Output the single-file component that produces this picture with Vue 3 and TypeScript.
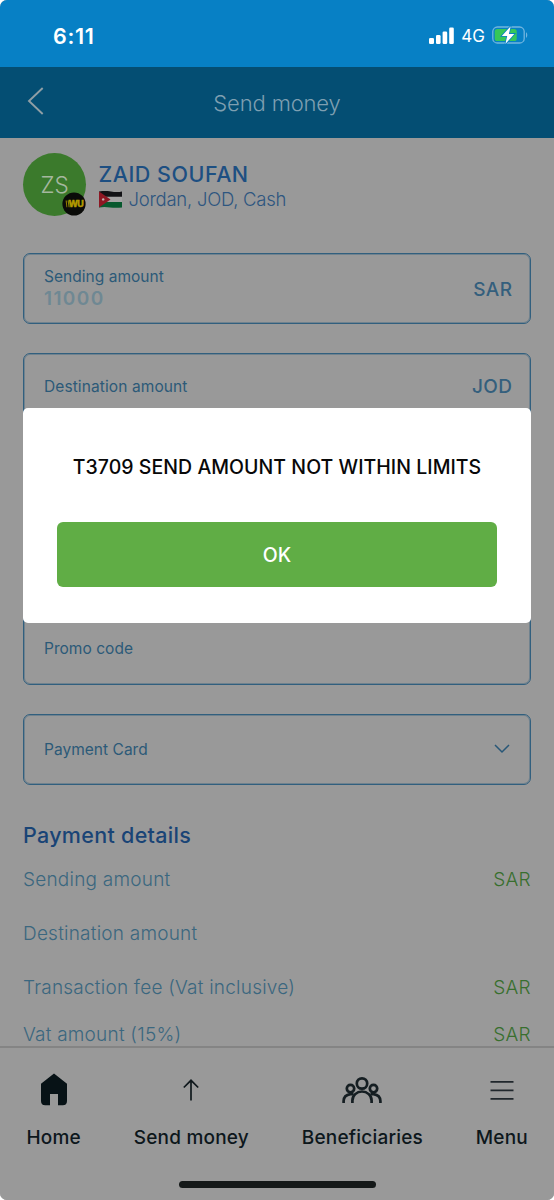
<script setup lang="ts">
interface DetailRow {
  label: string
  currency: string
  height: number
}

interface Tab {
  id: string
  label: string
}

const rows: DetailRow[] = [
  { label: 'Sending amount', currency: 'SAR', height: 54 },
  { label: 'Destination amount', currency: '', height: 54 },
  { label: 'Transaction fee (Vat inclusive)', currency: 'SAR', height: 47 },
  { label: 'Vat amount (15%)', currency: 'SAR', height: 43 },
]

const tabs: Tab[] = [
  { id: 'home', label: 'Home' },
  { id: 'send', label: 'Send money' },
  { id: 'people', label: 'Beneficiaries' },
  { id: 'menu', label: 'Menu' },
]
</script>

<template>
  <div class="phone">
    <header class="status">
      <span class="clock">6:11</span>
      <div class="indicators">
        <svg class="signal" width="26" height="17" viewBox="0 0 26 17">
          <rect x="0" y="11" width="5" height="6" rx="1.3" />
          <rect x="7" y="8" width="4.6" height="9" rx="1.3" />
          <rect x="13.6" y="4.5" width="4.6" height="12.5" rx="1.3" />
          <rect x="20.2" y="0.5" width="4.6" height="16.5" rx="1.3" />
        </svg>
        <span class="network">4G</span>
        <svg class="battery" width="36" height="20" viewBox="0 0 36 20">
          <rect x="0.8" y="2" width="31.4" height="16" rx="4.6" fill="none" stroke="#72b5df" stroke-width="1.3" />
          <rect x="2.7" y="4" width="22" height="12" rx="2.6" fill="#35c759" />
          <path d="M34 7.2c1.7.8 1.7 4.8 0 5.6z" fill="#72b5df" />
          <path d="M18.7 1.2 9.8 11h5.4l-1.8 8 8.9-10.1h-5.4z" fill="#fff" stroke="#0780c5" stroke-width="1.6" paint-order="stroke" />
        </svg>
      </div>
    </header>

    <nav class="titlebar">
      <svg class="back" width="18" height="30" viewBox="0 0 18 30">
        <path d="M15.7 2 2 15 15.7 28" fill="none" stroke="#8f9ea5" stroke-width="1.9" />
      </svg>
      <h1>Send money</h1>
    </nav>

    <main class="content">
      <section class="recipient">
        <div class="avatar">
          <span>ZS</span>
          <svg class="badge" width="24" height="24" viewBox="0 0 24 24">
            <circle cx="12" cy="12" r="11.6" fill="#0a0b08" />
            <path d="M3.6 8.6h1.2l.5 6.6H4.4zM5.5 8.6h1.3l.9 6.6H6.6z" fill="#8f7c00" />
            <text x="6.4" y="15.3">WU</text>
          </svg>
        </div>
        <div class="who">
          <div class="name">ZAID SOUFAN</div>
          <div class="place">
            <svg width="23" height="17" viewBox="0 0 23 17">
              <path d="M0 .4Q6-.6 12 .4t11 0V6H0z" fill="#131316" />
              <path d="M0 5.8h23v5.5H0z" fill="#a5a5a5" />
              <path d="M0 11h23v5.4q-6 .9-12 0t-11 0z" fill="#08592e" />
              <path d="M0 .4 11.5 8.4 0 16.4z" fill="#8d1723" />
              <circle cx="4.2" cy="8.4" r="1.2" fill="#c0b5b5" />
            </svg>
            <span>Jordan, JOD, Cash</span>
          </div>
        </div>
      </section>

      <div class="field amount">
        <div>
          <div class="label">Sending amount</div>
          <div class="value">11000</div>
        </div>
        <span class="currency sar">SAR</span>
      </div>
      <div class="field destination">
        <span class="label">Destination amount</span>
        <span class="currency">JOD</span>
      </div>
      <div class="field promo">
        <span class="label">Promo code</span>
      </div>
      <div class="field card">
        <span class="label">Payment Card</span>
        <svg class="chevron" width="18" height="12" viewBox="0 0 18 12">
          <path d="M2 2 9 9 16 2" fill="none" stroke="#285777" stroke-width="1.5" />
        </svg>
      </div>

      <h2>Payment details</h2>
      <div v-for="row in rows" :key="row.label" class="row" :style="{ height: row.height + 'px' }">
        <span>{{ row.label }}</span>
        <span class="green">{{ row.currency }}</span>
      </div>
    </main>

    <footer class="tabbar">
      <div class="tabs">
        <div v-for="tab in tabs" :key="tab.id" class="tab">
          <svg v-if="tab.id === 'home'" width="40" height="40" viewBox="0 0 40 40">
            <path d="M20 3.6 7 13.7V31q0 4.2 4.2 4.2H16V24h8v11.2h4.8q4.2 0 4.2-4.2V13.7z" fill="#071216" />
          </svg>
          <svg v-else-if="tab.id === 'send'" width="40" height="40" viewBox="0 0 40 40">
            <path d="M20 30.5V10.5M12.8 17.5 20 10.3l7.2 7.2" fill="none" stroke="#10191d" stroke-width="1.7" />
          </svg>
          <svg v-else-if="tab.id === 'people'" width="42" height="40" viewBox="0 0 42 40">
            <g fill="none" stroke="#151e22" stroke-width="2.7">
              <circle cx="21" cy="13.5" r="5.2" />
              <circle cx="9.5" cy="18.6" r="3.7" />
              <circle cx="32.5" cy="18.6" r="3.7" />
              <path d="M11.4 33v-2.5a9.6 9 0 0 1 19.2 0V33" />
              <path d="M2.6 33v-2q.2-6 6.8-6.9h3.1M39.4 33v-2q-.2-6-6.8-6.9h-3.1" />
            </g>
          </svg>
          <svg v-else width="40" height="40" viewBox="0 0 40 40">
            <path d="M8.5 11.8h23M8.5 20.3h23M8.5 28.8h23" stroke="#20272c" stroke-width="1.7" />
          </svg>
          <span>{{ tab.label }}</span>
        </div>
      </div>
      <div class="home-indicator"></div>
    </footer>

    <div class="scrim">
      <div class="dialog" role="alertdialog">
        <p>T3709 SEND AMOUNT NOT WITHIN LIMITS</p>
        <button type="button">OK</button>
      </div>
    </div>
  </div>
</template>

<style>
body {
  margin: 0;
  background: #fff;
}
</style>

<style scoped>
.phone {
  position: relative;
  display: flex;
  flex-direction: column;
  width: 554px;
  height: 1200px;
  overflow: hidden;
  border-radius: 7px;
  background: #999;
  font-family: Inter, "Liberation Sans", sans-serif;
  white-space: nowrap;
}
.phone * {
  box-sizing: border-box;
}
.status {
  display: flex;
  justify-content: space-between;
  flex: none;
  height: 67px;
  padding: 0 26px 0 53px;
  background: #0780c5;
  color: #fff;
}
.clock {
  margin-top: 21px;
  font-size: 21.5px;
  line-height: 30px;
  font-weight: 600;
  letter-spacing: 0.7px;
}
.indicators {
  display: flex;
  align-items: center;
  height: 72px;
}
.signal {
  margin-top: -2px;
  fill: #fff;
}
.network {
  margin: 0 7px 0 6px;
  font-size: 17px;
  font-weight: 400;
}
.battery {
  margin-top: -2px;
}
.titlebar {
  display: grid;
  grid-template-columns: 60px 1fr 60px;
  align-items: center;
  flex: none;
  height: 71px;
  background: #044e73;
}
.back {
  margin: -3px 0 0 27px;
}
h1 {
  margin: 0;
  text-align: center;
  font-size: 22px;
  font-weight: 300;
  letter-spacing: -0.15px;
  color: #7e9fb1;
}
.content {
  flex: 1;
  min-height: 0;
  padding: 0 23px;
  overflow: hidden;
}
.recipient {
  display: flex;
  height: 115px;
  padding-top: 15px;
}
.avatar {
  position: relative;
  width: 63px;
  height: 63px;
  border-radius: 50%;
  background: #3b7a2c;
  color: #a5b79f;
  font-size: 22.5px;
  font-weight: 300;
  line-height: 64px;
  text-align: center;
}
.badge {
  position: absolute;
  right: 0;
  bottom: 0;
}
.badge text {
  font-size: 9px;
  font-weight: 800;
  letter-spacing: -0.6px;
  fill: #b39a00;
  stroke: #b39a00;
  stroke-width: 0.4px;
}
.who {
  margin-left: 12.5px;
}
.name {
  margin-top: 6px;
  font-size: 21.5px;
  line-height: 30px;
  font-weight: 500;
  letter-spacing: 0.5px;
  color: #1d4f82;
}
.place {
  display: flex;
  align-items: center;
  gap: 7px;
  height: 20px;
  font-size: 18.5px;
  font-weight: 300;
  letter-spacing: -0.25px;
  color: #2e5680;
}
.field {
  display: flex;
  align-items: center;
  justify-content: space-between;
  height: 71px;
  margin-bottom: 29px;
  padding: 0 18px 0 20px;
  border: 1px solid #315f7e;
  border-radius: 7px;
  box-shadow: inset 0 0 0 1px rgba(49, 95, 126, 0.4);
}
.label {
  font-size: 15.5px;
  line-height: 22px;
  letter-spacing: 0.03px;
  color: #2c5a78;
}
.value {
  font-size: 19px;
  line-height: 22px;
  margin-bottom: 1px;
  font-weight: 600;
  letter-spacing: 1.4px;
  color: #6f8893;
}
.currency {
  font-size: 19px;
  font-weight: 500;
  letter-spacing: 0.4px;
  margin-right: -0.4px;
  color: #345f7d;
}
.sar {
  margin-top: 2px;
}
.destination {
  padding-bottom: 4px;
}
.destination .label {
  letter-spacing: 0.1px;
}
.promo {
  margin-top: 190px;
  padding-bottom: 2px;
}
.chevron {
  margin: -1px 1px 0 0;
}
h2 {
  margin: 34px 0 0;
  font-size: 21.5px;
  line-height: 32px;
  font-weight: 500;
  letter-spacing: 0.3px;
  color: #194476;
}
.row {
  display: flex;
  justify-content: space-between;
  padding-top: 14px;
  font-size: 19px;
  line-height: 30px;
  font-weight: 300;
  letter-spacing: 0.22px;
  color: #3b677f;
}
.green {
  margin-right: 0.3px;
  color: #386f2e;
}
.tabbar {
  flex: none;
  height: 154px;
  border-top: 2px solid #848484;
  background: #999;
}
.tabs {
  display: flex;
  justify-content: space-between;
  height: 134px;
  padding: 22px 26px 0 26.5px;
}
.tab {
  display: flex;
  flex-direction: column;
  align-items: center;
  font-size: 19px;
  line-height: 28px;
  font-weight: 500;
  letter-spacing: 0.2px;
  color: #0d171c;
}
.tab span {
  margin-top: 14px;
}
.home-indicator {
  width: 197px;
  height: 7px;
  margin: -1px auto 0;
  border-radius: 4px;
  background: #151919;
}
.scrim {
  position: absolute;
  inset: 67px 0 0;
  padding: 341px 23px 0;
}
.dialog {
  height: 215px;
  padding: 44px 34px 0;
  border-radius: 5px;
  background: #fff;
  text-align: center;
}
.dialog p {
  margin: 0;
  font-size: 19.5px;
  line-height: 30px;
  font-weight: 500;
  letter-spacing: 0.04px;
  color: #080808;
}
.dialog button {
  display: block;
  width: 440px;
  height: 65px;
  margin-top: 39.5px;
  padding: 1px 0 0;
  border: 0;
  border-radius: 6px;
  background: #60ad45;
  color: #fff;
  font: 500 19.5px Inter, "Liberation Sans", sans-serif;
}
</style>
